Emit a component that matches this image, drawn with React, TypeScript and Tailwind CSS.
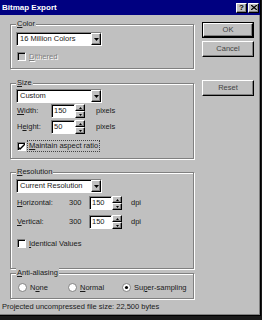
import React from "react";

const raised =
  "border border-t-white border-l-white border-r-black border-b-black shadow-[inset_-1px_-1px_0_#808080]";
const sunken =
  "border border-t-[#808080] border-l-[#808080] border-r-white border-b-white shadow-[inset_1px_1px_0_#000]";

function Group({ label, className, children }: { label: React.ReactNode; className: string; children?: React.ReactNode }) {
  return (
    <div className={`relative border border-[#808080] shadow-[inset_1px_1px_0_#fff,1px_1px_0_#fff] ${className}`}>
      <span className="absolute left-[5px] top-[-6px] bg-[#c0c0c0] px-[1px] leading-[10px]">{label}</span>
      {children}
    </div>
  );
}

function Select({ text }: { text: string }) {
  return (
    <div className={`flex h-[14px] w-[86px] bg-white ${sunken}`}>
      <span className="flex-1 pl-[3px] leading-[12px] whitespace-nowrap">{text}</span>
      <div className={`w-[10px] bg-[#c0c0c0] flex items-center justify-center ${raised}`}>
        <svg width="5" height="3" viewBox="0 0 5 3">
          <path d="M0 0h5L2.5 3z" fill="#000" />
        </svg>
      </div>
    </div>
  );
}

function Spin({ value, w }: { value: string; w: string }) {
  return (
    <div className="flex h-[14px]">
      <div className={`${w} bg-white ${sunken} leading-[12px] pl-[2px]`}>{value}</div>
      <div className="w-[10px] flex flex-col">
        <div className={`flex-1 bg-[#c0c0c0] ${raised} flex items-center justify-center`}>
          <svg width="3" height="2" viewBox="0 0 3 2">
            <path d="M1.5 0L3 2H0z" fill="#000" />
          </svg>
        </div>
        <div className={`flex-1 bg-[#c0c0c0] ${raised} flex items-center justify-center`}>
          <svg width="3" height="2" viewBox="0 0 3 2">
            <path d="M0 0h3L1.5 2z" fill="#000" />
          </svg>
        </div>
      </div>
    </div>
  );
}

function Check({ checked, disabled }: { checked?: boolean; disabled?: boolean }) {
  return (
    <div
      className={`w-[9px] h-[9px] shrink-0 ${disabled ? "bg-[#c0c0c0]" : "bg-white"} ${sunken} flex items-center justify-center`}
    >
      {checked && (
        <svg width="7" height="7" viewBox="0 0 7 7">
          <path d="M0 3l2 2 5-5v2l-5 5-2-2z" fill="#000" />
        </svg>
      )}
    </div>
  );
}

function Radio({ checked }: { checked?: boolean }) {
  return (
    <svg width="9" height="9" viewBox="0 0 9 9" className="shrink-0">
      <circle cx="4.5" cy="4.5" r="4" fill="#fff" stroke="#808080" strokeWidth="1" />
      {checked && <circle cx="4.5" cy="4.5" r="1.6" fill="#000" />}
    </svg>
  );
}

function Btn({ children, def, className }: { children: React.ReactNode; def?: boolean; className: string }) {
  if (def) {
    return (
      <div className={`w-[52px] h-[16px] border border-black ${className}`}>
        <div className={`w-full h-full ${raised} flex items-center justify-center text-[#444]`}>{children}</div>
      </div>
    );
  }
  return (
    <div className={`w-[52px] h-[16px] ${raised} flex items-center justify-center text-[#444] ${className}`}>
      {children}
    </div>
  );
}

export default function App() {
  return (
    <div className="w-[262px] h-[320px] bg-[#1a1a1a] overflow-hidden font-['Liberation_Sans',Arial,sans-serif] text-[7.5px] text-[#1a1a1a]">
      <div className="w-[261px] h-[316px] bg-[#c0c0c0] border-r border-b border-black shadow-[inset_-1px_-1px_0_#808080] flex flex-col">
        {/* title bar */}
        <div className="h-[15px] bg-[#000080] flex items-center pl-[2px] pr-[1px]">
          <span className="text-white font-bold text-[8px] leading-none">Bitmap Export</span>
          <div className="ml-auto flex gap-[1px]">
            <div className={`w-[11px] h-[10px] bg-[#c0c0c0] ${raised} flex items-center justify-center font-bold text-[8px] leading-none text-black`}>
              ?
            </div>
            <div className={`w-[11px] h-[10px] bg-[#c0c0c0] ${raised} flex items-center justify-center`}>
              <svg width="6" height="5" viewBox="0 0 6 5">
                <path d="M0 0L6 5M6 0L0 5" stroke="#000" strokeWidth="1.3" />
              </svg>
            </div>
          </div>
        </div>

        {/* body */}
        <div className="h-[284px] flex">
          <div className="w-[194px] pl-[10px] flex flex-col">
            <Group label={<><u>C</u>olor</>} className="mt-[9px] h-[45px] pt-[7px] pl-[5px]">
              <Select text="16 Million Colors" />
              <div className="mt-[6px] h-[9px] flex items-center pl-[1px] gap-[3px]">
                <Check disabled />
                <span className="text-[#808080] [text-shadow:1px_1px_0_#fff] leading-none">
                  <u>D</u>ithered
                </span>
              </div>
            </Group>

            <Group label={<><u>S</u>ize</>} className="mt-[14px] h-[76px] pt-[5px] pl-[5px]">
              <Select text="Custom" />
              <div className="mt-[1px] h-[14px] flex items-center pl-[1px]">
                <span className="w-[34px]">
                  <u>W</u>idth:
                </span>
                <Spin value="150" w="w-[24px]" />
                <span className="ml-[11px]">pixels</span>
              </div>
              <div className="mt-[2px] h-[14px] flex items-center pl-[1px]">
                <span className="w-[34px]">
                  H<u>e</u>ight:
                </span>
                <Spin value="50" w="w-[24px]" />
                <span className="ml-[11px]">pixels</span>
              </div>
              <div className="mt-[6px] h-[12px] flex items-center pl-[1px] gap-[1px]">
                <Check checked />
                <span className="border border-dotted border-[#444] px-[1px] leading-[10px]">
                  <u>M</u>aintain aspect ratio
                </span>
              </div>
            </Group>

            <Group label={<><u>R</u>esolution</>} className="mt-[13px] h-[97px] pt-[6px] pl-[5px]">
              <Select text="Current Resolution" />
              <div className="mt-[3px] h-[14px] flex items-center pl-[1px]">
                <span className="w-[52px]">
                  <u>H</u>orizontal:
                </span>
                <span className="w-[20px]">300</span>
                <Spin value="150" w="w-[23px]" />
                <span className="ml-[9px]">dpi</span>
              </div>
              <div className="mt-[5px] h-[14px] flex items-center pl-[1px]">
                <span className="w-[52px]">
                  <u>V</u>ertical:
                </span>
                <span className="w-[20px]">300</span>
                <Spin value="150" w="w-[23px]" />
                <span className="ml-[9px]">dpi</span>
              </div>
              <div className="mt-[10px] h-[9px] flex items-center pl-[1px] gap-[3px]">
                <Check />
                <span className="leading-none">
                  <u>I</u>dentical Values
                </span>
              </div>
            </Group>

            <Group label={<><u>A</u>nti-aliasing</>} className="mt-[4px] h-[26px] pt-[9px] pl-[7px]">
              <div className="h-[9px] flex items-center">
                <div className="w-[50px] flex items-center gap-[3px]">
                  <Radio />
                  <span className="leading-none">
                    N<u>o</u>ne
                  </span>
                </div>
                <div className="w-[54px] flex items-center gap-[3px]">
                  <Radio />
                  <span className="leading-none">
                    <u>N</u>ormal
                  </span>
                </div>
                <div className="flex items-center gap-[3px]">
                  <Radio checked />
                  <span className="leading-none whitespace-nowrap">
                    Su<u>p</u>er-sampling
                  </span>
                </div>
              </div>
            </Group>
          </div>

          <div className="pl-[8px] pt-[7px] flex flex-col">
            <Btn def className="">OK</Btn>
            <Btn className="mt-[3px]">Cancel</Btn>
            <Btn className="mt-[23px]">Reset</Btn>
          </div>
        </div>

        {/* status */}
        <div className="h-[16px] flex items-center pl-[2px] whitespace-nowrap">
          Projected uncompressed file size: 22,500 bytes
        </div>
      </div>
    </div>
  );
}
